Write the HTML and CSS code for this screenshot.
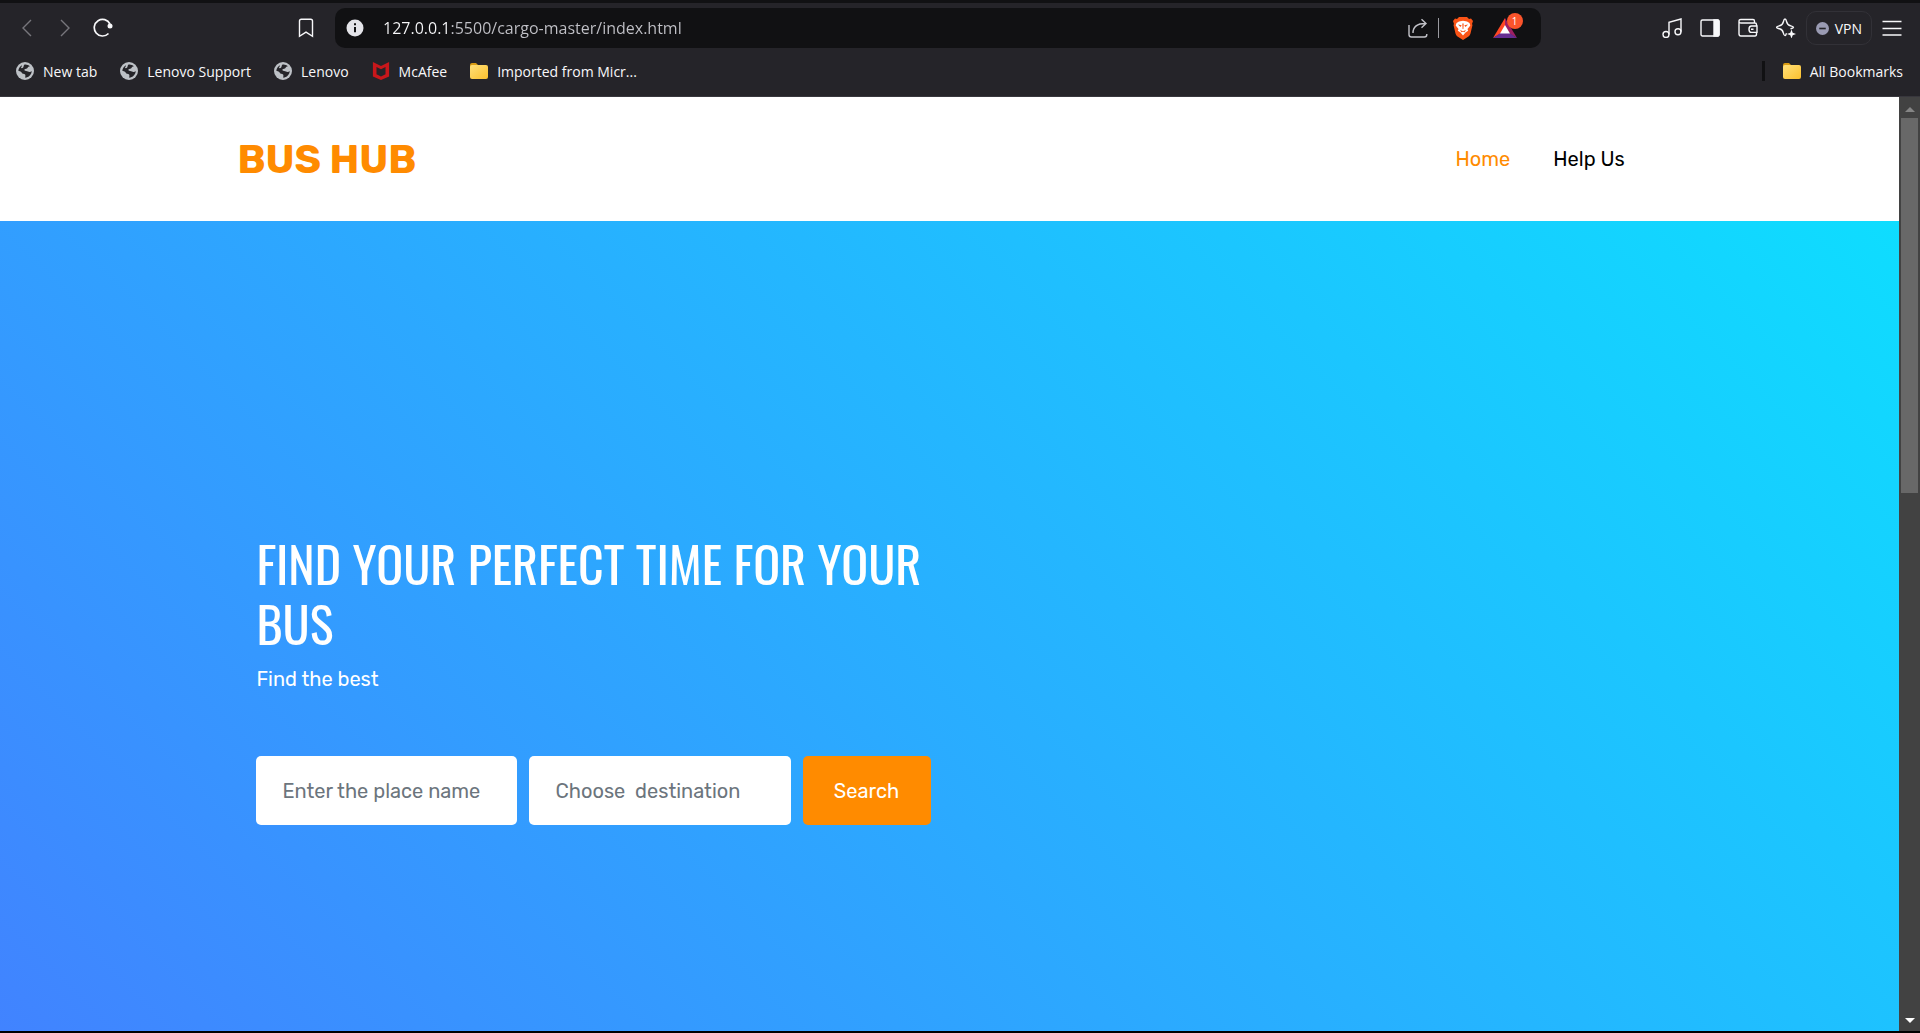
FILE: index.html
```html
<!DOCTYPE html>
<html lang="en">
<head>
<meta charset="utf-8">
<title>Bus Hub</title>
<link rel="stylesheet" href="styles.css">
</head>
<body>
<svg class="defs" aria-hidden="true">
  <defs>
    <linearGradient id="gold" x1="0" y1="0" x2="1" y2="1"><stop offset="0" stop-color="#ffe07a"/><stop offset="1" stop-color="#fbc02d"/></linearGradient>
    <symbol id="globe" viewBox="0 0 18 18"><circle cx="9" cy="9" r="9" fill="#bdc1c6"/><path d="M8.500 2.500c1.800-.4 4 .3 5.400 1.800-1.300.2-1.900.8-2.400 1.700-.5 1-2.300.5-2.900 1.300-.5.8.1 1.700 1.500 1.700 1.500 0 2.300.8 3.300.9.900.1 1.700-.4 2.300-.9 0 3.400-2.900 6.600-6.500 6.700l.2-2.100c.1-1.300-1-1.600-2.200-1.800-1.400-.3-1.500-1.800-2.700-2.400L2.300 8.700C2.600 6.300 4 4.300 6 3.200c0 1.300-.8 2-1.200 2.800 1.600.5 2.500-.2 2.700-1.300.1-.9.400-1.500 1-2.200z" fill="#252429"/></symbol>
    <symbol id="folder" viewBox="0 0 20 16"><path d="M1 2Q1 0 3 0h4l2 2h8v4H1z" fill="#d99b12"/><rect x="1" y="2" width="18" height="14" rx="2" fill="url(#gold)"/></symbol>
  </defs>
</svg>
<div class="browser">
  <div class="toolbar">
    <div class="history">
      <button class="tool dim" aria-label="Back"><svg viewBox="0 0 20 20"><path d="M14 2 6 10l8 8"/></svg></button>
      <button class="tool dim" aria-label="Forward"><svg viewBox="0 0 20 20"><path d="m6 2 8 8-8 8"/></svg></button>
      <button class="tool" aria-label="Reload"><svg viewBox="0 0 20 20"><path d="M15.500 15.500A8.300 8.300 0 1 1 17 6" stroke-width="1.700"/><circle cx="17" cy="8" r="2.500" fill="currentColor" stroke="none"/></svg></button>
    </div>
    <button class="tool" aria-label="Bookmark this page"><svg viewBox="0 0 20 20"><path d="M3.500 18.300V3q0-1.800 1.800-1.800h9.400q1.800 0 1.800 1.800v15.300L10 14.200z"/></svg></button>
    <div class="address">
      <button class="tool" aria-label="Site information"><svg viewBox="0 0 20 20"><circle cx="10" cy="10" r="8.500" fill="#e4e4e9" stroke="none"/><path d="M10 9v5.200M10 5.300v2" stroke="#111113" stroke-width="2"/></svg></button>
      <input class="url" type="text" aria-label="Address" value="127.0.0.1:5500/cargo-master/index.html">
      <button class="tool share" aria-label="Share"><svg viewBox="0 0 20 20"><path d="M1 7v9.500Q1 19 3.500 19h13q2.300 0 2.300-2.500V16M5 15C5 8.500 9 5.500 17.500 5.500M13.500 1.200l4.500 4.300-4.500 4.300"/></svg></button>
      <span class="rule"></span>
      <button class="tool" aria-label="Shields"><svg class="tall" viewBox="0 0 20 23"><path d="M6 0h8l2 2 2-.5L20 4l-1 3 .5 1-2 8.500q-.5 2-2 3L10 23l-5.500-3.500q-1.500-1-2-3L.5 8 1 7 0 4l2-2.500L4 2z" fill="#fb5417"/><path d="M6 4.500l4-.7 4 .7L16.500 6l.8 2.500-2.800 3.500.7 1.700-2.700 1.700L10 18.500l-2.500-3.100-2.700-1.700.7-1.700-2.800-3.500L3.500 6z" fill="#fff"/><path d="m5 7.500 3.700.8-1.200 1.700zM15 7.500l-3.700.8 1.200 1.700zM9.300 6.500h1.400l-.3 5.500h-.8zM7 13l3 1.300 3-1.300-1.500 2.200L10 14.800l-1.500.4z" fill="#fb5417"/></svg></button>
      <button class="tool rewards" aria-label="Rewards"><svg class="wide" viewBox="0 0 24 20"><path d="M12 0 0 20l12-7z" fill="#ff4724"/><path d="m12 0 12 20-12-7z" fill="#9e1f63"/><path d="M0 20h24l-12-8z" fill="#662d91"/><path d="m12 7 5 8.500H7z" fill="#fff"/></svg><span class="badge">1</span></button>
    </div>
    <div class="actions">
      <button class="tool" aria-label="Playlist"><svg viewBox="0 0 20 20"><circle cx="4" cy="16.500" r="3"/><circle cx="16" cy="13.700" r="3"/><path d="M7 16.500V4.300L19 1v12.700"/></svg></button>
      <button class="tool" aria-label="Sidebar"><svg viewBox="0 0 20 20"><rect x="1" y="2" width="18" height="16" rx="1.500"/><path d="M14 2h4l1 1v14l-1 1h-4z" fill="currentColor"/></svg></button>
      <button class="tool" aria-label="Wallet"><svg viewBox="0 0 20 20"><path d="M18.500 8V6.500Q18.500 5 17 5H3Q1 5 1 3.200T3 1.500h12q1.500 0 1.500 1.700V5M1 3.500v12.300Q1 18 3 18h14q1.500 0 1.500-2v-1.500M19 8h-5.500Q11 8 11 11.200t2.500 3.200H19zM13 11.200h2.500"/></svg></button>
      <button class="tool" aria-label="Leo"><svg viewBox="0 0 20 20"><path d="M9 1c1 0 1.200 1 1.700 3 .6 2.500 1.300 3.200 3.800 3.800 2 .5 3 .7 3 1.500s-1 1-3 1.500M9 1C8 1 7.800 2 7.300 4 6.700 6.500 6 7.200 3.500 7.800c-2 .5-3 .7-3 1.500s1 1 3 1.500c2.500.6 3.200 1.500 3.800 4 .5 2 .7 2.800 1.700 2.800.8 0 1-.6 1.500-2.300"/><path d="m15.500 11.500 1.200 3.300 3.300 1.200-3.300 1.200-1.200 3.300-1.200-3.300L11 16l3.300-1.200z" fill="currentColor" stroke="none"/></svg></button>
      <button class="vpn"><svg viewBox="0 0 12 12"><circle cx="6" cy="6" r="6" fill="#9a9bb3"/><path d="M3 6h6" stroke="#252429" stroke-width="1.500"/></svg>VPN</button>
      <button class="tool" aria-label="Menu"><svg viewBox="0 0 20 20"><path d="M.5 3.500h19M.5 10.500h19M.5 17h19"/></svg></button>
    </div>
  </div>
  <nav class="bookmarks" aria-label="Bookmarks">
    <a href="#"><svg><use href="#globe"/></svg>New tab</a>
    <a href="#"><svg><use href="#globe"/></svg>Lenovo Support</a>
    <a href="#"><svg><use href="#globe"/></svg>Lenovo</a>
    <a href="#"><svg viewBox="0 0 18 20"><path d="m0 0 9 4.500L18 0v16l-9 4-9-4zM4 5.500v8l5 2.500 5-2.500v-8L9 8z" fill="#c8171b"/></svg>McAfee</a>
    <a href="#"><svg><use href="#folder"/></svg>Imported from Micr...</a>
    <span class="divider"></span>
    <a href="#"><svg><use href="#folder"/></svg>All Bookmarks</a>
  </nav>
</div>
<div class="viewport">
  <div class="page">
    <header class="site-header">
      <div class="container bar">
        <a class="logo" href="#">BUS HUB</a>
        <nav class="menu"><a class="active" href="#">Home</a><a href="#">Help Us</a></nav>
      </div>
    </header>
    <main class="hero">
      <div class="container">
        <div class="intro">
          <h1>FIND YOUR PERFECT TIME FOR YOUR BUS</h1>
          <p>Find the best</p>
          <form class="search">
            <input type="text" aria-label="Place name" placeholder="Enter the place name">
            <input type="text" aria-label="Destination" placeholder="Choose  destination">
            <button type="button">Search</button>
          </form>
        </div>
      </div>
    </main>
  </div>
  <div class="scrollbar" aria-hidden="true">
    <svg viewBox="0 0 10 6"><path d="M0 6 5 1l5 5z" fill="#858585"/></svg>
    <div class="track"><div class="thumb"></div></div>
    <svg viewBox="0 0 10 6"><path d="m0 0 5 5 5-5z" fill="#fff"/></svg>
  </div>
</div>
</body>
</html>
```
FILE: styles.css
```css
* { box-sizing: border-box; }

body {
  margin: 0;
  min-height: 100vh;
  display: flex;
  flex-direction: column;
  background: #000;
  font-family: Rubik, Roboto, sans-serif;
  font-size: 20px;
}

a { color: inherit; text-decoration: none; }
button { font: inherit; color: inherit; border: 0; background: none; padding: 0; }
.defs { position: absolute; width: 0; height: 0; }

/* Browser frame */
.browser {
  height: 97px;
  border-top: 3px solid #111113;
  border-bottom: 1px solid #38373d;
  background: #252429;
  color: #f8f8fa;
  font-family: "Segoe UI", "Open Sans", sans-serif;
  font-size: 14px;
}
.toolbar { display: flex; align-items: center; height: 50px; padding: 0 18px 0 17px; }
.tool { display: flex; flex: none; }
.tool svg {
  width: 20px;
  height: 20px;
  fill: none;
  stroke: currentColor;
  stroke-width: 1.400;
}
.tool svg.tall { height: 23px; stroke: none; }
.tool svg.wide { width: 24px; stroke: none; }
.dim { color: #77767c; }
.history { display: flex; gap: 18px; margin-right: 183px; }
.address {
  flex: 1;
  display: flex;
  align-items: center;
  height: 40px;
  margin-left: 19px;
  padding: 0 24px 0 10px;
  border-radius: 10px;
  background: #111113;
}
.url {
  flex: 1;
  min-width: 0;
  margin-left: 18px;
  padding: 0;
  border: 0;
  /* the host is brighter than the rest of the address */
  background: linear-gradient(90deg, #f8f8fa 67px, #c2c2c8 67px);
  background-clip: text;
  color: transparent;
  font: inherit;
  font-size: 16px;
}
.share { color: #c2c2c8; }
.rule { width: 1px; height: 20px; margin: 0 14px 0 10px; background: #9a9aa0; }
.rewards { position: relative; margin-left: 20px; }
.badge {
  position: absolute;
  top: -5px;
  right: -6px;
  width: 16px;
  height: 16px;
  border-radius: 50%;
  background: #fb542b;
  color: #fff;
  font-size: 10px;
  line-height: 16px;
}
.actions { display: flex; align-items: center; gap: 18px; margin-left: 121px; }
.vpn {
  display: flex;
  align-items: center;
  gap: 6px;
  height: 34px;
  margin: 0 -8px;
  padding: 0 9px;
  border: 1px solid #323137;
  border-radius: 10px;
}
.vpn svg { width: 13px; height: 13px; }
.bookmarks { display: flex; align-items: center; gap: 22px; height: 36px; padding: 0 17px 0 15px; }
.bookmarks a { display: flex; align-items: center; gap: 8px; }
.bookmarks svg { width: 20px; height: 18px; }
.divider { width: 3px; height: 20px; margin: 0 -5px 0 auto; background: #111113; }

/* Page and scrollbar */
.viewport { flex: 1; display: flex; margin-bottom: 2px; }
.page { flex: 1; display: flex; flex-direction: column; }
.container { width: 75%; max-width: 1425px; margin: 0 auto; }
.site-header { background: #fff; }
.bar { display: flex; align-items: center; justify-content: space-between; height: 124px; }
.logo { color: #ff8b00; font-size: 40px; font-weight: 700; }
.menu { display: flex; gap: 43px; margin-right: 37px; color: #000; }
.menu .active { color: #ff8b00; }

.hero {
  flex: 1;
  display: flex;
  align-items: center;
  padding-top: 105px;
  background: linear-gradient(45deg, #4183ff, #0eddff);
  color: #fff;
}
.intro { width: 50%; padding: 0 19px; }
h1 {
  margin: 0;
  font-family: Oswald, "Roboto Condensed", sans-serif;
  font-size: 50px;
  font-weight: 400;
  line-height: 60px;
}
p { margin: 7px 0 57px; line-height: 40px; }
.search { display: flex; gap: 12px; }
.search input,
.search button { height: 69px; border: 0; border-radius: 5px; font: inherit; }
.search input { flex: 1; min-width: 0; padding: 0 26px; background: #fff; }
.search input::placeholder { color: #6c757d; opacity: 1; }
.search button { flex: none; width: 128px; background: #ff8b00; color: #fff; }

.scrollbar {
  width: 21px;
  display: flex;
  flex-direction: column;
  align-items: center;
  padding: 9px 0 7px;
  background: #424242;
}
.scrollbar svg { width: 10px; height: 6px; }
.track { flex: 1; margin: 6px 0; }
.thumb { width: 17px; height: 42%; background: #686868; }
```
